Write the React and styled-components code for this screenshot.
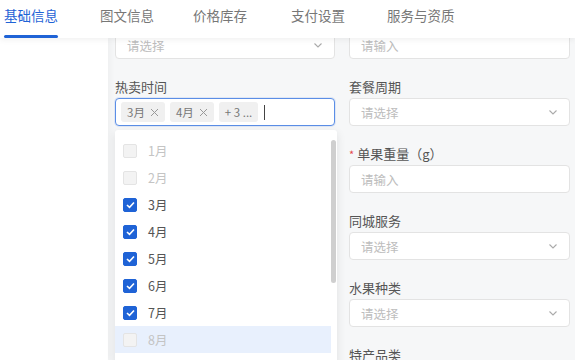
import React from 'react'
import styled, { createGlobalStyle } from 'styled-components'

const GlobalStyle = createGlobalStyle`
  html, body {
    margin: 0;
    padding: 0;
    width: 575px;
    height: 360px;
    overflow: hidden;
    background: #f6f7f8;
    font-family: "Noto Sans CJK SC", "Noto Sans", sans-serif;
  }
`

const Page = styled.div`
  width: 575px;
  height: 360px;
  display: flex;
  flex-direction: column;
  overflow: hidden;
`

const TabBar = styled.div`
  position: relative;
  z-index: 3;
  height: 38px;
  flex-shrink: 0;
  background: #fff;
  display: flex;
  align-items: stretch;
  padding-left: 4px;
  box-shadow: 0 2px 6px rgba(0, 0, 0, 0.06);
`

const Tab = styled.div`
  position: relative;
  margin-right: ${p => p.gap}px;
  font-size: 13.5px;
  line-height: 30px;
  color: ${p => (p.active ? '#1f63d6' : '#777')};
  white-space: nowrap;
  &::after {
    content: '';
    display: ${p => (p.active ? 'block' : 'none')};
    position: absolute;
    left: 0;
    right: 0;
    bottom: 0;
    height: 3px;
    border-radius: 2px;
    background: #1f63d6;
  }
`

const Body = styled.div`
  flex: 1;
  display: flex;
  overflow: hidden;
`

const Side = styled.div`
  width: 108px;
  flex-shrink: 0;
  background: #fff;
  position: relative;
  z-index: 1;
  box-shadow: 2px 0 6px rgba(0, 0, 0, 0.04);
`

const FormArea = styled.div`
  flex: 1;
  padding: 0 5px 0 7px;
  margin-top: -28px;
`

const Grid = styled.div`
  display: grid;
  grid-template-columns: 220px 221px;
  column-gap: 14px;
  row-gap: 18px;
`

const Field = styled.div`
  position: relative;
  display: flex;
  flex-direction: column;
  grid-column: ${p => p.col || 'auto'};
`

const Label = styled.div`
  height: 20px;
  font-size: 13px;
  line-height: 20px;
  margin-bottom: 1px;
  color: #555;
  white-space: nowrap;
`

const Star = styled.span`
  color: #e5484d;
  font-size: 11px;
  margin-right: 3px;
`

const Box = styled.div`
  height: 28px;
  box-sizing: border-box;
  border: 1px solid ${p => (p.focus ? '#5b8ee6' : '#e3e3e3')};
  border-radius: 4px;
  background: #fff;
  display: flex;
  align-items: center;
  padding: 0 ${p => (p.focus ? 5 : 11)}px;
  gap: 5px;
  box-shadow: ${p => (p.focus ? '0 0 0 1px rgba(91, 142, 230, 0.15)' : 'none')};
`

const Placeholder = styled.span`
  flex: 1;
  font-size: 12.5px;
  color: #bdbdbd;
`

const Tag = styled.span`
  height: 20px;
  display: inline-flex;
  align-items: center;
  padding: 0 6px;
  border-radius: 3px;
  background: #f0f0f0;
  font-size: 11.5px;
  color: #777;
  gap: 5px;
`

const Close = styled.svg`
  width: 9px;
  height: 9px;
`

const Caret = styled.span`
  width: 1px;
  height: 15px;
  background: #444;
  margin-left: 1px;
`

const Chevron = () => (
  <svg width="10" height="10" viewBox="0 0 10 10">
    <path d="M1.5 3.5 L5 7 L8.5 3.5" fill="none" stroke="#aaa" strokeWidth="1.1" />
  </svg>
)

const Dropdown = styled.div`
  position: absolute;
  z-index: 2;
  top: 53px;
  left: 0;
  width: 222px;
  height: 240px;
  background: #fff;
  border-radius: 3px;
  box-shadow: 0 3px 10px rgba(0, 0, 0, 0.1);
  padding-top: 7px;
  box-sizing: border-box;
`

const ScrollThumb = styled.div`
  position: absolute;
  right: 1px;
  top: 10px;
  width: 5px;
  height: 143px;
  border-radius: 3px;
  background: #cfcfcf;
`

const Option = styled.div`
  height: 27px;
  margin-right: 6px;
  display: flex;
  align-items: center;
  padding-left: 8px;
  gap: 11px;
  font-size: 12.5px;
  color: ${p => (p.disabled ? '#c4c4c4' : '#555')};
  background: ${p => (p.hover ? '#e8f0fd' : 'transparent')};
`

const Check = styled.span`
  width: 14px;
  height: 14px;
  box-sizing: border-box;
  border-radius: 2px;
  display: inline-flex;
  align-items: center;
  justify-content: center;
  background: ${p => (p.checked ? '#1f63d6' : '#f3f3f3')};
  border: 1px solid ${p => (p.checked ? '#1f63d6' : '#e4e4e4')};
`

const months = [
  { t: '1月', disabled: true },
  { t: '2月', disabled: true },
  { t: '3月', checked: true },
  { t: '4月', checked: true },
  { t: '5月', checked: true },
  { t: '6月', checked: true },
  { t: '7月', checked: true },
  { t: '8月', disabled: true, hover: true },
]

const Select = () => (
  <Box>
    <Placeholder>请选择</Placeholder>
    <Chevron />
  </Box>
)

const Input = () => (
  <Box>
    <Placeholder>请输入</Placeholder>
  </Box>
)

const X = () => (
  <Close viewBox="0 0 9 9">
    <path d="M1 1 L8 8 M8 1 L1 8" stroke="#999" strokeWidth="1" />
  </Close>
)

export default function App() {
  return (
    <Page>
      <GlobalStyle />
      <TabBar>
        <Tab active gap={42}>基础信息</Tab>
        <Tab gap={39}>图文信息</Tab>
        <Tab gap={44}>价格库存</Tab>
        <Tab gap={42}>支付设置</Tab>
        <Tab gap={0}>服务与资质</Tab>
      </TabBar>
      <Body>
        <Side />
        <FormArea>
          <Grid>
            {/* first row sits under the tab bar, labels scrolled out of view */}
            <Field>
              <Label />
              <Select />
            </Field>
            <Field>
              <Label />
              <Input />
            </Field>
            <Field>
              <Label>热卖时间</Label>
              <Box focus>
                <Tag>3月<X /></Tag>
                <Tag>4月<X /></Tag>
                <Tag>+ 3 ...</Tag>
                <Caret />
              </Box>
              <Dropdown>
                {months.map(m => (
                  <Option key={m.t} disabled={m.disabled} hover={m.hover}>
                    <Check checked={m.checked}>
                      {m.checked && (
                        <svg width="9" height="8" viewBox="0 0 9 8">
                          <path d="M1 4 L3.5 6.3 L8 1.5" fill="none" stroke="#fff" strokeWidth="1.6" />
                        </svg>
                      )}
                    </Check>
                    {m.t}
                  </Option>
                ))}
                <ScrollThumb />
              </Dropdown>
            </Field>
            <Field>
              <Label>套餐周期</Label>
              <Select />
            </Field>
            <Field col={2}>
              <Label><Star>*</Star>单果重量（g）</Label>
              <Input />
            </Field>
            <Field col={2}>
              <Label>同城服务</Label>
              <Select />
            </Field>
            <Field col={2}>
              <Label>水果种类</Label>
              <Select />
            </Field>
            <Field col={2}>
              <Label>特产品类</Label>
              <Select />
            </Field>
          </Grid>
        </FormArea>
      </Body>
    </Page>
  )
}
